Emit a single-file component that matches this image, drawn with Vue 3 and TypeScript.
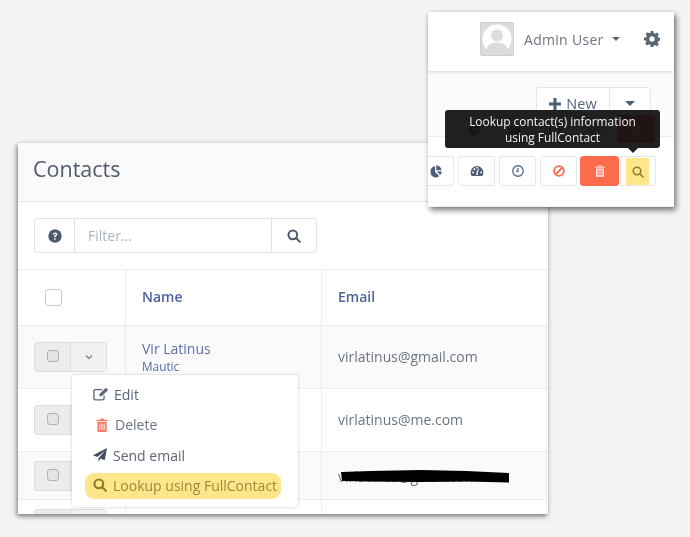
<script setup lang="ts">
interface Row { email: string; name?: string; company?: string; cls: string; redacted?: boolean }
const rows: Row[] = [
  { email: 'virlatinus@gmail.com', name: 'Vir Latinus', company: 'Mautic', cls: 'r1' },
  { email: 'virlatinus@me.com', cls: 'r2' },
  { email: 'virlatinus@gmail.com', cls: 'r3', redacted: true },
  { email: '', cls: 'r4' },
]
const icons = {
  pie: 'M10.500 3.500v10l7 7a10 10 0 0 1-7 2.600 10 10 0 0 1 0-19.600zM12.500 2a9 9 0 0 1 8.800 8.800h-8.800zM13 12.800h9a10 10 0 0 1-2.900 6.200z',
  gauge: 'M12 3.500a11 11 0 0 0-11 11c0 2.300.7 4.300 1.800 6h18.400a11 11 0 0 0 1.800-6 11 11 0 0 0-11-11zM5 16a1.600 1.600 0 1 1 0-3.200 1.600 1.600 0 0 1 0 3.200zm2.500-5.500a1.600 1.600 0 1 1 0-3.200 1.600 1.600 0 0 1 0 3.200zM12 7.900a1.600 1.600 0 1 1 0-3.200 1.600 1.600 0 0 1 0 3.200zm1.300 11h-2.600l.7-5.500 3-5.500 1 .4-1.900 5.800zM19 16a1.600 1.600 0 1 1 0-3.200A1.600 1.600 0 0 1 19 16z',
  trash: 'M6.500 3L8 .8h4L13.500 3H19.500v2.400H.5V3zM2 7h16v15a2 2 0 0 1-2 2H4a2 2 0 0 1-2-2zm3.500 3v10.500h1.600V10zm3.700 0v10.500h1.600V10zm3.700 0v10.500h1.600V10z',
}
</script>

<template>
  <div class="canvas">
    <section class="win main-win">
      <header class="title">Contacts</header>
      <div class="filter-wrap">
        <div class="filter">
          <span class="f-icon f-help">
            <svg width="14" height="14" viewBox="0 0 24 24"><circle cx="12" cy="12" r="11.500" fill="#4d5a6b" /><path d="M8 9.300c.3-2.300 2-3.500 4.200-3.500 2.300 0 4 1.400 4 3.400 0 2.900-3.200 2.800-3.200 4.800h-2.500c0-3.200 3-3.200 3-4.800 0-.7-.6-1.200-1.400-1.200-.9 0-1.500.6-1.700 1.500z M10.500 15.700H13v2.600h-2.500z" fill="#fff" /></svg>
          </span>
          <span class="f-input">Filter...</span>
          <span class="f-icon f-search">
            <svg width="14" height="14" viewBox="0 0 24 24" fill="none" stroke="#4d5a6b" stroke-width="3.400"><circle cx="10" cy="10" r="7.500" /><path d="M15.500 15.500l6.500 6.500" stroke-linecap="round" /></svg>
          </span>
        </div>
      </div>
      <div class="table">
        <div class="tr head">
          <div class="td c1"><span class="head-check"></span></div>
          <div class="td c2 th">Name</div>
          <div class="td c3 th">Email</div>
        </div>
        <div v-for="r in rows" :key="r.cls" class="tr" :class="r.cls">
          <div class="td c1">
            <div class="btn-group">
              <span class="bg-cell"><i class="mini-check"></i></span>
              <span class="bg-cell bg-right">
                <svg width="8" height="6" viewBox="0 0 8 6" fill="none" stroke="#6b7686" stroke-width="1.100"><path d="M1 1.500l3 3 3-3" /></svg>
              </span>
            </div>
          </div>
          <div class="td c2">
            <div v-if="r.name" class="contact-name">{{ r.name }}</div>
            <div v-if="r.company" class="company">{{ r.company }}</div>
          </div>
          <div class="td c3 email">
            <span>{{ r.email }}</span>
            <svg v-if="r.redacted" class="redact" width="170" height="16" viewBox="0 0 170 16"><path d="M1 2l30-1 50-1 45 1 43 2v9.500l-43-1-45 .5-50-.5L2 11z" fill="#000" /></svg>
          </div>
        </div>
      </div>
      <div class="menu">
        <div class="mi mi-edit">
          <svg width="16" height="14" viewBox="0 0 26 22" fill="none" stroke="#5b6675" stroke-width="2.200"><path d="M18 14v3.500a3 3 0 0 1-3 3H4.500a3 3 0 0 1-3-3V7a3 3 0 0 1 3-3H15" /><path d="M10 15l1-4.500L21 1l3.500 3.300L15 14z" fill="#5b6675" stroke="none" /></svg>
          <span>Edit</span>
        </div>
        <div class="mi mi-del">
          <svg width="12" height="14" viewBox="0 0 20 24"><path :d="icons.trash" fill="#fb7a66" /></svg>
          <span>Delete</span>
        </div>
        <div class="mi mi-send">
          <svg width="14" height="14" viewBox="0 0 24 24"><path d="M24 0L20 21l-7-3-3.500 5.500V17.500L21 4 7.500 15.500 0 12.500z" fill="#3f4d5e" /></svg>
          <span>Send email</span>
        </div>
        <div class="mi mi-look">
          <svg width="14" height="14" viewBox="0 0 24 24" fill="none" stroke="#8f7c2c" stroke-width="3.600"><circle cx="10" cy="10" r="7.500" /><path d="M15.500 15.500l6.500 6.500" stroke-linecap="round" /></svg>
          <span>Lookup using FullContact</span>
        </div>
      </div>
    </section>

    <section class="win top-win">
      <header class="user-bar">
        <span class="avatar">
          <svg width="32" height="32" viewBox="0 0 32 32"><circle cx="16" cy="16" r="14.500" fill="#fff" /><circle cx="16" cy="12.500" r="6" fill="#dcdcdc" /><path d="M5.500 26c1-5 6-6.500 10.500-6.500S25.500 21 26.500 26A14.500 14.500 0 0 1 5.500 26z" fill="#dcdcdc" /></svg>
        </span>
        <span class="user-name">Admin User</span>
        <i class="caret"></i>
        <svg class="cog" width="16" height="16" viewBox="0 0 24 24"><path fill-rule="evenodd" d="M10 0h4l.7 3.300 2 .8L19.500 2.300l2.800 2.800-1.800 2.800.8 2 3.300.7v4l-3.300.7-.8 2 1.800 2.800-2.800 2.800-2.800-1.800-2 .8L14 24h-4l-.7-3.300-2-.8-2.800 1.800-2.800-2.800 1.800-2.800-.8-2L0 14v-4l3.300-.7.8-2L2.300 4.500 5.100 1.700l2.800 1.800 2-.8zM12 8a4 4 0 1 0 0 8 4 4 0 0 0 0-8z" fill="#5b6675" /></svg>
      </header>
      <div class="tools">
        <div class="new-row">
          <div class="new-group">
            <span class="new-btn"><svg width="12" height="12" viewBox="0 0 12 12"><path d="M4.500 0h3v4.500H12v3H7.500V12h-3V7.500H0v-3h4.500z" fill="#4d5c70" /></svg>New</span>
            <span class="new-drop"><i class="caret dark"></i></span>
          </div>
        </div>
        <div class="ghost-row">
          <span class="ghost"><svg width="13" height="13" viewBox="0 0 24 24"><path :d="icons.pie" fill="#4d5c70" /></svg></span>
          <span class="ghost"><svg width="13" height="13" viewBox="0 0 24 24"><path :d="icons.gauge" fill="#4d5c70" fill-rule="evenodd" /></svg></span>
          <span class="ghost"><svg width="12" height="12" viewBox="0 0 24 24" fill="none" stroke="#4d5c70" stroke-width="2.600"><circle cx="12" cy="12" r="10.500" /></svg></span>
          <span class="ghost"><svg width="12" height="12" viewBox="0 0 24 24" fill="none" stroke="#fb6a52" stroke-width="3.600"><circle cx="12" cy="12" r="9.800" /><path d="M5 19L19 5" /></svg></span>
          <span class="ghost ghost-red"><svg width="10" height="12" viewBox="0 0 20 24"><path :d="icons.trash" fill="#ffd6cf" /></svg></span>
        </div>
      </div>
      <div class="actions">
        <span class="act act-cut">
          <svg width="14" height="14" viewBox="0 0 24 24"><path :d="icons.pie" fill="#4f5f78" /></svg>
        </span>
        <span class="act">
          <svg width="14" height="14" viewBox="0 0 24 24"><path :d="icons.gauge" fill="#4f5f78" fill-rule="evenodd" /></svg>
        </span>
        <span class="act">
          <svg width="12" height="12" viewBox="0 0 24 24" fill="none" stroke="#4f6a90" stroke-width="2.600"><circle cx="12" cy="12" r="10.500" /><path d="M12 6v6.500H8.500" /></svg>
        </span>
        <span class="act">
          <svg width="12" height="12" viewBox="0 0 24 24" fill="none" stroke="#fb6a52" stroke-width="3.600"><circle cx="12" cy="12" r="9.800" /><path d="M5 19L19 5" /></svg>
        </span>
        <span class="act act-del">
          <svg width="10" height="12" viewBox="0 0 20 24"><path :d="icons.trash" fill="#ffd6cf" /></svg>
        </span>
        <span class="act act-look">
          <span class="look-inner">
            <svg width="12" height="12" viewBox="0 0 24 24" fill="none" stroke="#8f7c2c" stroke-width="3.200"><circle cx="10" cy="10" r="7.500" /><path d="M15.500 15.500l6.500 6.500" stroke-linecap="round" /></svg>
          </span>
        </span>
      </div>
      <div class="tooltip">Lookup contact(s) information<br />using FullContact<i class="tip-arrow"></i></div>
    </section>
  </div>
</template>

<style>
html, body { margin: 0; background: #f4f4f4; }
</style>

<style scoped>
.canvas {
  position: relative;
  width: 690px;
  height: 537px;
  overflow: hidden;
  background: #f4f4f4;
  font-family: "Open Sans", "Noto Sans", sans-serif;
  color: #5b6675;
  filter: blur(.35px);
}
.win { position: absolute; background: #fff; box-sizing: border-box; }
.main-win {
  left: 18px; top: 143px; width: 530px; height: 371px;
  box-shadow: -1px 2px 5px rgba(0,0,0,.55);
}
.table { height: 244px; overflow: hidden; }
.title {
  height: 59px; box-sizing: border-box; padding: 11px 0 0 15px;
  background: #fafafa; border-bottom: 1px solid #e8e8e8;
  font-size: 21.500px; line-height: 30px; color: #4e5b6b;
}
.filter-wrap { height: 68px; box-sizing: border-box; padding: 16px 0 0 16px; border-bottom: 1px solid #ececec; }
.filter {
  display: flex; width: 283px; height: 35px; box-sizing: border-box;
  border: 1px solid #e4e4e4; border-radius: 3px;
}
.f-icon { display: flex; align-items: center; justify-content: center; }
.f-help { width: 39px; border-right: 1px solid #e4e4e4; }
.f-input { flex: 1; padding-left: 13px; font-size: 14px; line-height: 34px; color: #aeb6c0; }
.f-search { width: 44px; border-left: 1px solid #e4e4e4; }
.tr { display: flex; border-bottom: 1px solid #ececec; box-sizing: border-box; }
.td { box-sizing: border-box; height: 100%; }
.c1 { width: 108px; border-right: 1px solid #ececec; padding: 16px 0 0 16px; }
.c2 { width: 196px; border-right: 1px solid #ececec; padding-left: 16px; }
.c3 { width: 225px; border-right: 1px solid #ececec; padding-left: 16px; position: relative; }
.head { height: 56px; }
.head .c1 { padding: 19px 0 0 27px; }
.head-check {
  display: block; width: 17px; height: 17px; box-sizing: border-box;
  border: 1px solid #c9c9c9; border-radius: 3px; background: #fff;
}
.th { font-size: 14px; font-weight: 600; line-height: 53px; color: #4e60a0; }
.r1 { height: 63px; background: #fafafa; }
.r2 { height: 63px; }
.r3 { height: 48px; background: #fafafa; }
.r3 .c1 { padding-top: 9px; }
.r4 { height: 20px; border-bottom: 0; }
.r4 .c1 { padding-top: 9px; }
.btn-group {
  display: flex; width: 73px; height: 30px; box-sizing: border-box;
  border: 1px solid #dcdcdc; border-radius: 3px; background: #ececee;
}
.bg-cell { flex: 1; display: flex; align-items: center; justify-content: center; }
.bg-right { border-left: 1px solid #dcdcdc; background: #f1f1f2; }
.mini-check {
  display: block; width: 12px; height: 12px; margin-top: -3px; box-sizing: border-box;
  border: 1px solid #b0b0b0; border-radius: 3px; background: #e4e4e6;
}
.contact-name { margin-top: 13px; font-size: 14px; line-height: 20px; color: #5f6fa5; }
.company { font-size: 11.800px; line-height: 15px; color: #5a6ca3; }
.email { font-size: 14px; line-height: 62px; color: #6b7583; }
.r3 .email { line-height: 49px; }
.redact { position: absolute; left: 18px; top: 18px; }
.menu {
  position: absolute; left: 54px; top: 232px; width: 226px; height: 132px;
  box-sizing: border-box; padding: 4px 13px 0;
  background: #fff; border-radius: 3px;
  box-shadow: 0 0 3px rgba(0,0,0,.22);
}
.mi {
  display: flex; align-items: center; gap: 5px; height: 30.500px; padding-left: 8px;
  font-size: 14px; color: #5b6675; white-space: nowrap;
}
.mi-del { padding-left: 11px; gap: 7px; color: #6a7482; }
.mi-send { gap: 6px; }
.mi-look {
  height: 26px; box-sizing: border-box; margin: 2px 4px 0 0; padding: 0 0 1px 8px; gap: 6px;
  background: #ffe68a; border-radius: 9px; color: #9a8a3e;
}
.top-win {
  left: 428px; top: 12px; width: 246px; height: 195px;
  box-shadow: 2px 3px 6px rgba(0,0,0,.55);
}
.user-bar {
  display: flex; align-items: center; height: 59px; box-sizing: border-box;
  padding: 0 14px 5px 52px;
  background: #fff; box-shadow: 0 1px 3px rgba(0,0,0,.14);
  position: relative;
}
.avatar {
  display: flex; align-items: center; justify-content: center;
  width: 34px; height: 34px; box-sizing: border-box;
  background: #dcdcdc; border: 1px solid #cfcfcf; border-radius: 2px;
}
.user-name { margin-left: 10px; font-size: 14px; letter-spacing: .3px; color: #6b7480; }
.caret {
  display: block; width: 0; height: 0; margin-left: 8px;
  border-left: 4px solid transparent; border-right: 4px solid transparent; border-top: 4px solid #5b6675;
}
.caret.dark { margin: 0; border-top-color: #4d5c70; border-left-width: 5px; border-right-width: 5px; border-top-width: 5px; }
.cog { margin-left: auto; }
.tools { height: 66px; box-sizing: border-box; padding-top: 16px; background: #fbfbfb; border-bottom: 1px solid #eeeeee; }
.new-row { display: flex; justify-content: flex-end; padding-right: 23px; height: 33px; }
.new-group { display: flex; height: 33px; box-sizing: border-box; border: 1px solid #e6e6e6; border-radius: 3px; background: #fff; }
.new-btn {
  display: flex; align-items: center; justify-content: center; gap: 5px;
  width: 72px; font-size: 14.500px; color: #54647e;
}
.new-drop { display: flex; align-items: center; justify-content: center; width: 40px; border-left: 1px solid #e6e6e6; }
.ghost-row { display: flex; gap: 3px; height: 28px; margin-top: -5px; padding-left: 28px; position: relative; }
.ghost {
  display: flex; align-items: center; justify-content: center;
  width: 37px; height: 28px; box-sizing: border-box;
  border: 1px solid #e6e6e6; border-radius: 3px; background: #fff;
}
.ghost-red { width: 38px; margin-left: 1px; background: #fb6a52; border-color: #fb6a52; }
.actions { display: flex; gap: 4px; height: 70px; box-sizing: border-box; padding-top: 19px; background: #fff; border-bottom: 1px solid #f0f0f0; }
.act {
  display: flex; align-items: center; justify-content: center;
  width: 37px; height: 30px; box-sizing: border-box;
  border: 1px solid #e6e6e6; border-radius: 3px; background: #fff;
}
.act-cut { width: 26px; border-left: 0; border-radius: 0 3px 3px 0; justify-content: flex-start; padding-left: 1px; }
.act-del { width: 39px; margin-left: -1px; background: #fd6b4f; border-color: #fd6b4f; }
.act-look { width: 36px; margin-left: -3px; align-items: flex-end; justify-content: flex-start; padding-left: 5px; }
.look-inner {
  display: flex; align-items: center; justify-content: center;
  width: 23px; height: 27px; background: #ffe68a;
}
.tooltip {
  position: absolute; left: 17px; top: 98px; width: 215px; height: 38px;
  box-sizing: border-box; padding-top: 3px;
  background: rgba(15,15,15,.93); border-radius: 3px;
  color: #f2f2f2; font-size: 11.900px; line-height: 16px; text-align: center;
}
.tip-arrow {
  position: absolute; left: 183px; bottom: -5px; width: 0; height: 0;
  border-left: 5px solid transparent; border-right: 5px solid transparent;
  border-top: 5px solid rgba(15,15,15,.93);
}
</style>
